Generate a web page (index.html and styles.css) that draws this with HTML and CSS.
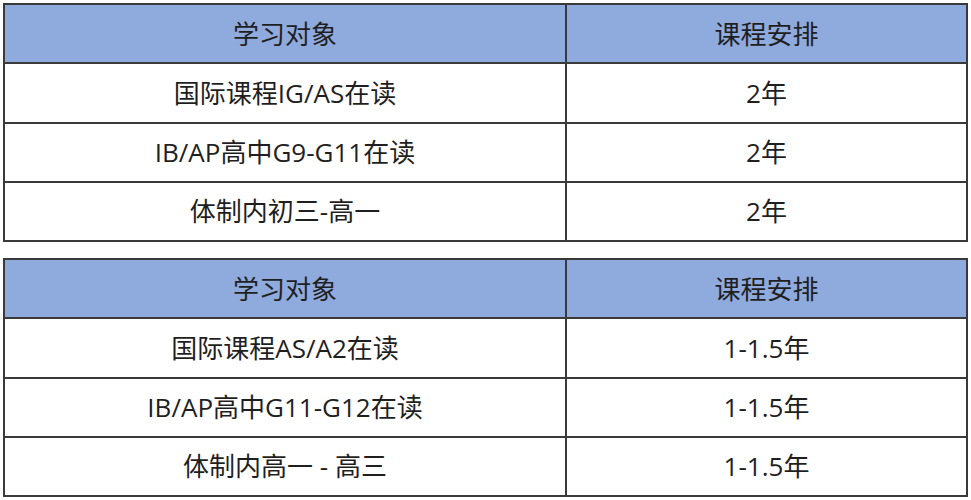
FILE: index.html
```html
<!DOCTYPE html>
<html lang="zh">
<head>
<meta charset="utf-8">
<link rel="stylesheet" href="styles.css">
</head>
<body>
<div class="page">
  <table class="plan">
    <colgroup><col class="c1"><col class="c2"></colgroup>
    <tr class="head"><th>学习对象</th><th>课程安排</th></tr>
    <tr><td>国际课程IG/AS在读</td><td>2年</td></tr>
    <tr><td>IB/AP高中G9-G11在读</td><td>2年</td></tr>
    <tr><td>体制内初三-高一</td><td>2年</td></tr>
  </table>
  <table class="plan">
    <colgroup><col class="c1"><col class="c2"></colgroup>
    <tr class="head"><th>学习对象</th><th>课程安排</th></tr>
    <tr><td>国际课程AS/A2在读</td><td>1-1.5年</td></tr>
    <tr><td>IB/AP高中G11-G12在读</td><td>1-1.5年</td></tr>
    <tr><td>体制内高一 - 高三</td><td>1-1.5年</td></tr>
  </table>
</div>
</body>
</html>
```
FILE: styles.css
```css
html, body {
  margin: 0;
  padding: 0;
  background: #ffffff;
}
.page {
  padding: 3px 0 0 3px;
  display: flex;
  flex-direction: column;
  gap: 16px;
  font-family: "Open Sans", "Noto Sans CJK SC", sans-serif;
  color: #1f1f1f;
}
.plan {
  width: 963px;
  height: 239px;
  border-collapse: collapse;
  table-layout: fixed;
}
.c1 { width: 562px; }
.c2 { width: 401px; }
.plan th, .plan td {
  border: 2px solid #3a3a3a;
  text-align: center;
  vertical-align: middle;
  font-size: 26px;
  font-weight: 400;
  padding: 0;
  line-height: 1;
}
.plan .head th {
  background: #8faadc;
  font-weight: 400;
}
```
